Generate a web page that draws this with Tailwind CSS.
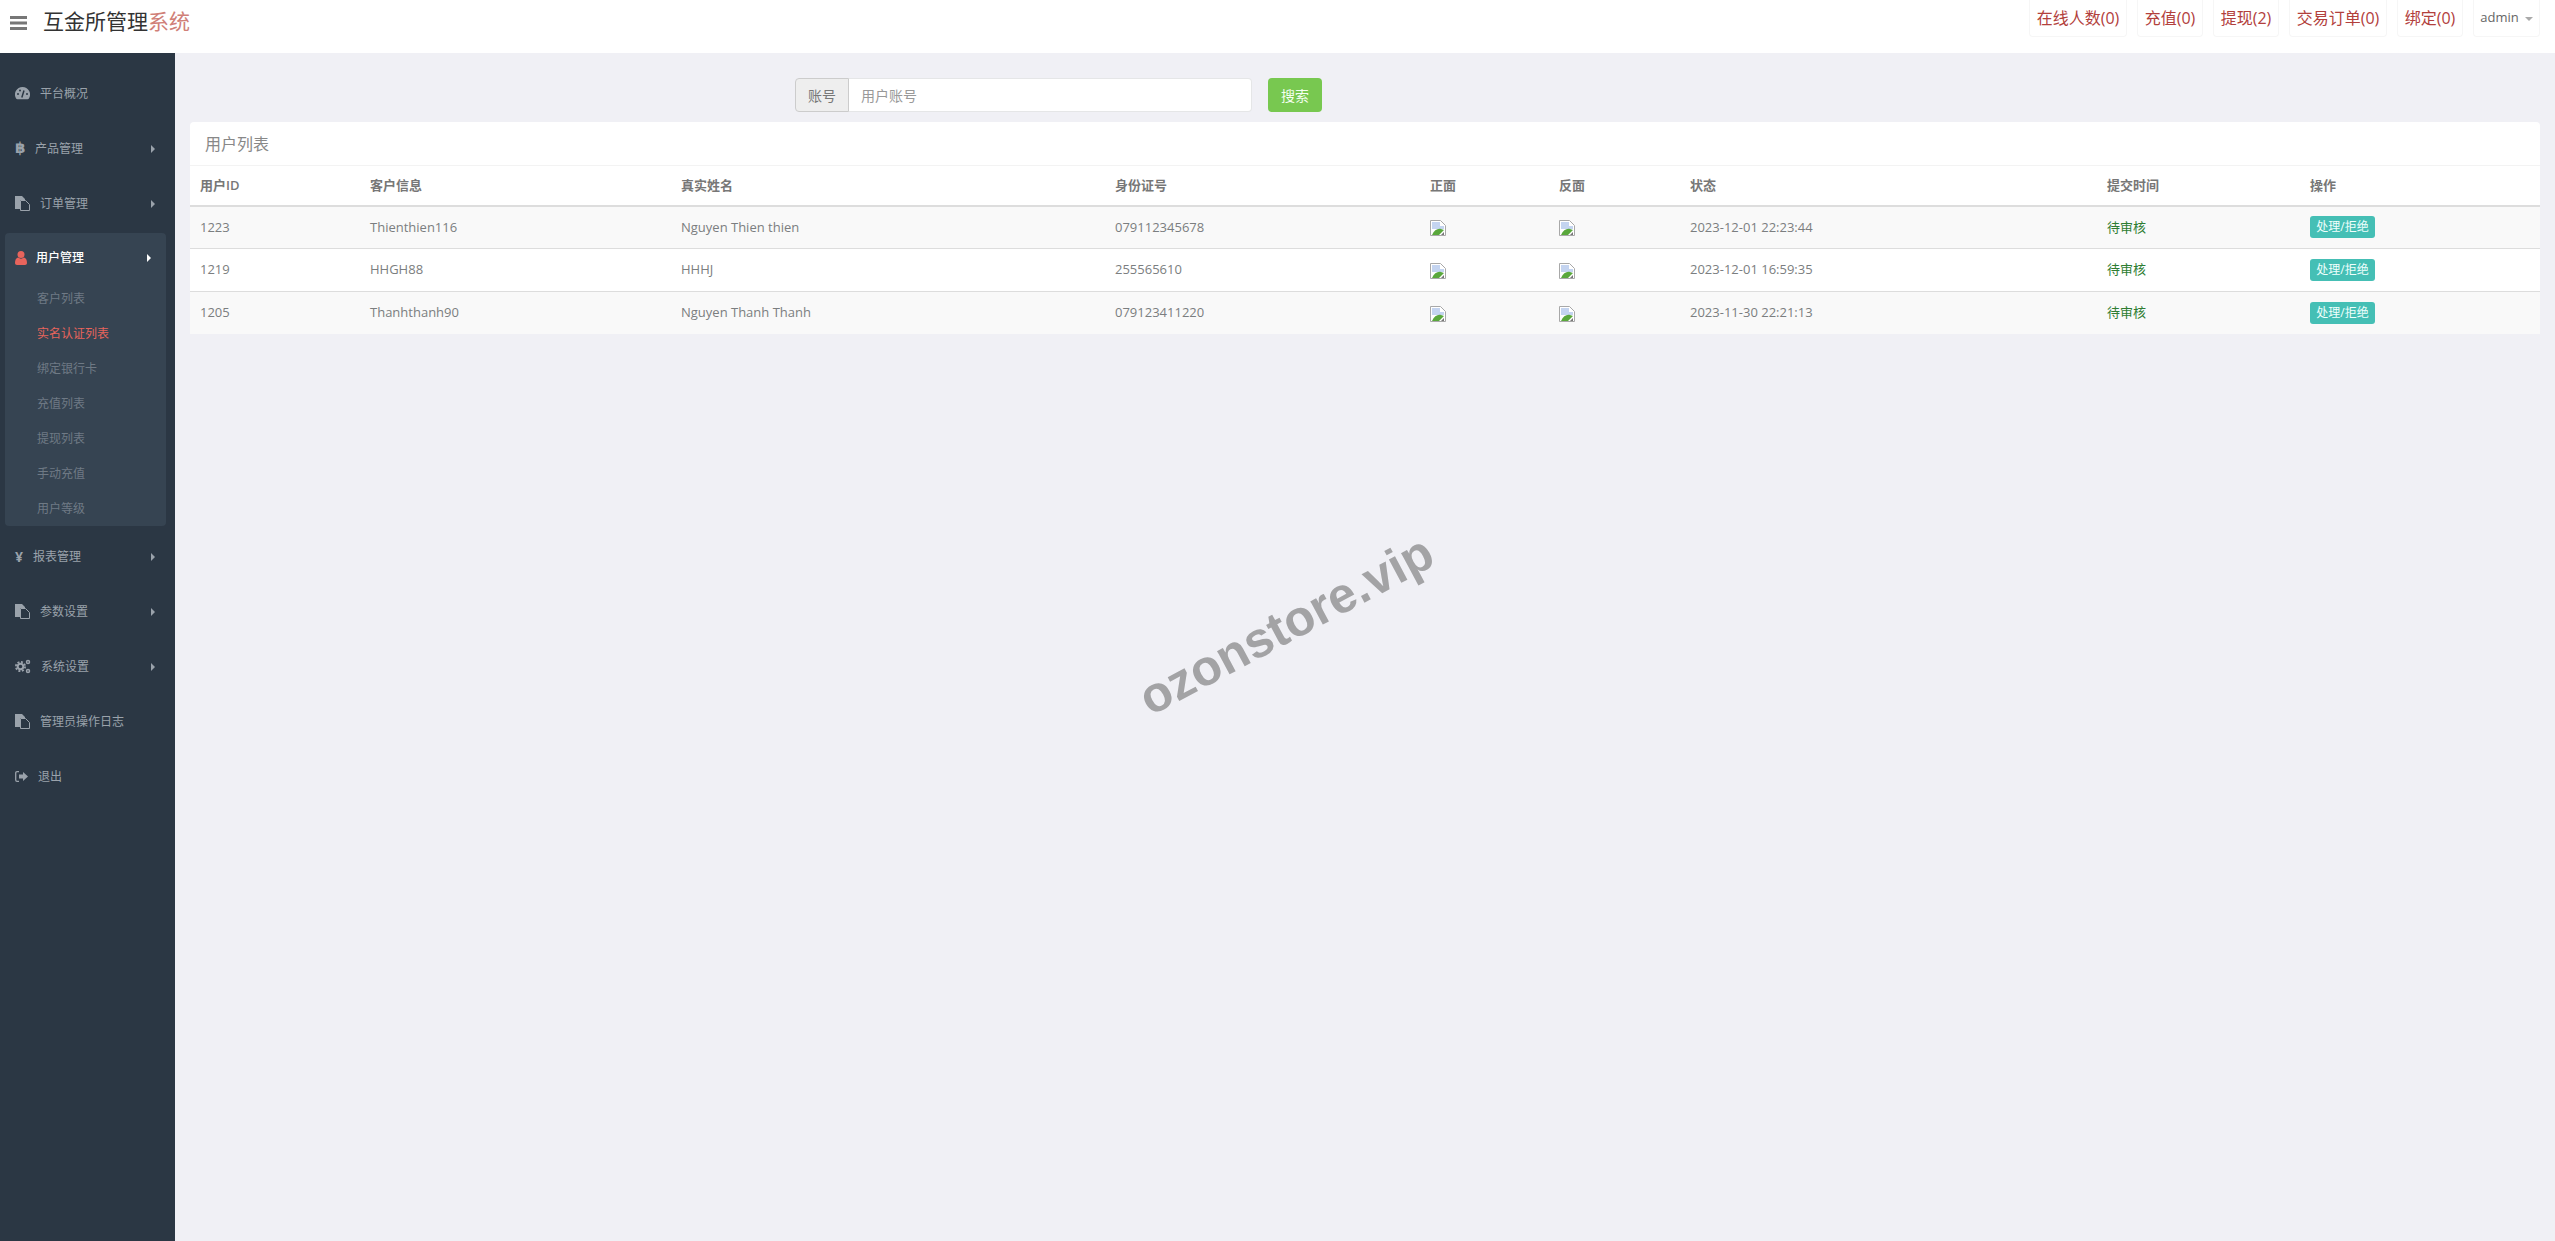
<!DOCTYPE html>
<html lang="zh">
<head>
    <meta charset="UTF-8">
    <title>互金所管理系统</title>
    <script src="https://cdn.jsdelivr.net/npm/@tailwindcss/browser@4"></script>
</head>
<body class="relative h-[1241px] overflow-hidden bg-[#f0f0f5] text-[13px] text-[#676a6c] font-['Open_Sans','Noto_Sans_CJK_SC',sans-serif]">

    <!-- Top bar -->
    <header class="flex h-[53px] bg-white">
        <div class="flex h-[45px] items-start pl-[10px] pt-[16px]">
            <svg class="w-[17px] h-[14px]" viewBox="0 0 17 14"><path fill="#777" d="M0 0h17v3H0zM0 5.500h17v3H0zM0 11h17v3H0z"/></svg>
            <span class="ml-[16px] -mt-[10px] text-[21px] leading-[30px] text-[#333]">互金所管理<span class="text-[#d08078]">系统</span></span>
        </div>
        <nav class="ml-auto mr-[15px] flex h-[37px] gap-[10px] text-[16px] text-[#b2403c]">
            <a class="flex w-[98px] items-center justify-center rounded-b border border-t-0 border-[#f6f6f6]">在线人数(0)</a>
            <a class="flex w-[66px] items-center justify-center rounded-b border border-t-0 border-[#f6f6f6]">充值(0)</a>
            <a class="flex w-[66px] items-center justify-center rounded-b border border-t-0 border-[#f6f6f6]">提现(2)</a>
            <a class="flex w-[98px] items-center justify-center rounded-b border border-t-0 border-[#f6f6f6]">交易订单(0)</a>
            <a class="flex w-[66px] items-center justify-center rounded-b border border-t-0 border-[#f6f6f6]">绑定(0)</a>
            <a class="flex w-[67px] items-center justify-center gap-[6px] rounded-b border border-t-0 border-[#f6f6f6] text-[13px] text-[#666]">admin<span class="mt-[1px] border-x-[4px] border-t-[4px] border-x-transparent border-t-[#aaa]"></span></a>
        </nav>
    </header>

    <div class="flex h-[1188px]">
        <!-- Sidebar -->
        <aside class="w-[175px] shrink-0 bg-[#2b3744] pt-[13px] text-[12px] text-[#9aa2ab]">
            <a class="flex h-[55px] items-center pl-[15px]">
                <svg class="mr-[10px] w-[15px] h-[13px]" viewBox="0 0 15 13"><path fill="#9aa2ab" d="M7.500 0a7.500 7.500 0 0 1 6.400 11.400c-.3.500-.7.800-1.300.8H2.400c-.6 0-1-.3-1.300-.8A7.500 7.500 0 0 1 7.500 0z"/><circle cx="3" cy="7" r="1" fill="#2b3744"/><circle cx="5" cy="3.500" r="1" fill="#2b3744"/><circle cx="12" cy="7" r="1" fill="#2b3744"/><path stroke="#2b3744" stroke-width="1.500" d="M6.800 10.500 9 3.500"/></svg>
                <span>平台概况</span>
            </a>
            <a class="flex h-[55px] items-center pl-[15px]">
                <span class="mr-[5px] w-[15px] text-[15px] font-bold leading-none font-['DejaVu_Sans']">฿</span>
                <span>产品管理</span>
                <span class="ml-auto mr-[20px] border-y-[4px] border-l-[4px] border-y-transparent border-l-[#9aa2ab]"></span>
            </a>
            <a class="flex h-[55px] items-center pl-[15px]">
                <svg class="mr-[10px] w-[15px] h-[15px]" viewBox="0 0 15 15"><path fill="#9aa2ab" d="M0 0h7l3 3v1H5v9H0z"/><path fill="none" stroke="#9aa2ab" d="M5.500 4.500h5l4 4v6h-9z"/></svg>
                <span>订单管理</span>
                <span class="ml-auto mr-[20px] border-y-[4px] border-l-[4px] border-y-transparent border-l-[#9aa2ab]"></span>
            </a>

            <!-- Open group -->
            <div class="mx-[5px] mt-[2px] h-[293px] w-[161px] rounded bg-[#364452]">
                <a class="flex h-[48px] items-center pl-[10px] pt-[2px] font-medium text-white">
                    <svg class="mr-[9px] w-[12px] h-[14px]" viewBox="0 0 12 14"><circle cx="6" cy="3.500" r="3.500" fill="#e8645c"/><path fill="#e8645c" d="M0 12c0-3 1-5 3-5.500 2 1.500 4 1.500 6 0 2 .5 3 2.500 3 5.500 0 1.200-.8 2-2 2H2c-1.200 0-2-.8-2-2z"/></svg>
                    <span>用户管理</span>
                    <span class="ml-auto mr-[15px] border-y-[4px] border-l-[4px] border-y-transparent border-l-white"></span>
                </a>
                <ul class="text-[#6f7a85]">
                    <li class="flex h-[35px] items-center pl-[32px]">客户列表</li>
                    <li class="flex h-[35px] items-center pl-[32px] text-[#e8645c]">实名认证列表</li>
                    <li class="flex h-[35px] items-center pl-[32px]">绑定银行卡</li>
                    <li class="flex h-[35px] items-center pl-[32px]">充值列表</li>
                    <li class="flex h-[35px] items-center pl-[32px]">提现列表</li>
                    <li class="flex h-[35px] items-center pl-[32px]">手动充值</li>
                    <li class="flex h-[35px] items-center pl-[32px]">用户等级</li>
                </ul>
            </div>

            <a class="mt-[3px] flex h-[55px] items-center pl-[15px]">
                <span class="mr-[9px] w-[9px] text-[14px] font-bold leading-none">¥</span>
                <span>报表管理</span>
                <span class="ml-auto mr-[20px] border-y-[4px] border-l-[4px] border-y-transparent border-l-[#9aa2ab]"></span>
            </a>
            <a class="flex h-[55px] items-center pl-[15px]">
                <svg class="mr-[10px] w-[15px] h-[15px]" viewBox="0 0 15 15"><path fill="#9aa2ab" d="M0 0h7l3 3v1H5v9H0z"/><path fill="none" stroke="#9aa2ab" d="M5.500 4.500h5l4 4v6h-9z"/></svg>
                <span>参数设置</span>
                <span class="ml-auto mr-[20px] border-y-[4px] border-l-[4px] border-y-transparent border-l-[#9aa2ab]"></span>
            </a>
            <a class="flex h-[55px] items-center pl-[15px]">
                <svg class="mr-[10px] w-[16px] h-[15px]" viewBox="0 0 16 15" fill="none" stroke="#9aa2ab"><circle cx="5.500" cy="7.500" r="2.800" stroke-width="2"/><circle cx="5.500" cy="7.500" r="4.600" stroke-width="1.800" stroke-dasharray="2 1.600"/><circle cx="13" cy="3" r="1.500" stroke-width="1.500"/><circle cx="13" cy="12" r="1.500" stroke-width="1.500"/></svg>
                <span>系统设置</span>
                <span class="ml-auto mr-[20px] border-y-[4px] border-l-[4px] border-y-transparent border-l-[#9aa2ab]"></span>
            </a>
            <a class="flex h-[55px] items-center pl-[15px]">
                <svg class="mr-[10px] w-[15px] h-[15px]" viewBox="0 0 15 15"><path fill="#9aa2ab" d="M0 0h15v0H0z"/><path fill="none" stroke="#9aa2ab" d="M.5 0h0"/><path fill="#9aa2ab" d="M0 0h7l3 3v1H5v9H0z"/><path fill="none" stroke="#9aa2ab" d="M5.500 4.500h5l4 4v6h-9z"/></svg>
                <span>管理员操作日志</span>
            </a>
            <a class="flex h-[55px] items-center pl-[15px]">
                <svg class="mr-[10px] w-[13px] h-[11px]" viewBox="0 0 13 11"><path fill="none" stroke="#9aa2ab" stroke-width="1.300" d="M4 .7H2A1.300 1.300 0 0 0 .7 2v7A1.300 1.300 0 0 0 2 10.300h2"/><path fill="#9aa2ab" d="M4 3.500h4V1l5 4.500L8 10V7.500H4z"/></svg>
                <span>退出</span>
            </a>
        </aside>

        <!-- Main -->
        <main class="min-w-0 flex-1">
            <div class="ml-[620px] mt-[25px] flex h-[34px] text-[14px]">
                <span class="flex w-[54px] items-center justify-center rounded-l border border-[#ccc] bg-[#eee] text-[#777]">账号</span>
                <input class="h-full w-[403px] rounded-r border border-l-0 border-[#e5e6e7] bg-white px-[12px] placeholder-[#999]" placeholder="用户账号">
                <button class="ml-[16px] w-[54px] rounded bg-[#78c850] text-[#f4fff0]">搜索</button>
            </div>

            <section class="mx-[15px] mt-[10px] rounded-t bg-white">
                <h2 class="flex h-[44px] items-center border-b border-[#f3f3f3] pl-[15px] text-[16px] font-normal text-[#888]">用户列表</h2>
                <table class="w-[2350px] table-fixed text-left">
                    <thead>
                        <tr class="h-[40px] border-b-2 border-[#ddd] font-bold text-[#777]">
                            <th class="w-[170px] pl-[10px] font-semibold">用户ID</th>
                            <th class="w-[311px] pl-[10px] font-semibold">客户信息</th>
                            <th class="w-[434px] pl-[10px] font-semibold">真实姓名</th>
                            <th class="w-[315px] pl-[10px] font-semibold">身份证号</th>
                            <th class="w-[129px] pl-[10px] font-semibold">正面</th>
                            <th class="w-[131px] pl-[10px] font-semibold">反面</th>
                            <th class="w-[417px] pl-[10px] font-semibold">状态</th>
                            <th class="w-[203px] pl-[10px] font-semibold">提交时间</th>
                            <th class="w-[240px] pl-[10px] font-semibold">操作</th>
                        </tr>
                    </thead>
                    <tbody class="text-[#7b7e80]">
                        <tr class="h-[42px] bg-[#f9f9f9]">
                            <td class="pl-[10px]">1223</td>
                            <td class="pl-[10px]">Thienthien116</td>
                            <td class="pl-[10px]">Nguyen Thien thien</td>
                            <td class="pl-[10px]">079112345678</td>
                            <td class="pl-[10px]"><svg class="mt-[2px] w-[16px] h-[16px]" viewBox="0 0 16 16"><path fill="#fff" stroke="#a8a8a8" d="M.5.5h10l5 5v10H.5z"/><path fill="#c4d4f0" d="M2 2h8v4h4v3H2z"/><path fill="#5aa83c" d="M2 15c2-5 6-7 9-6l3 1-5 5z"/><path fill="#777" d="M11 15l3-3v3z"/></svg></td>
                            <td class="pl-[10px]"><svg class="mt-[2px] w-[16px] h-[16px]" viewBox="0 0 16 16"><path fill="#fff" stroke="#a8a8a8" d="M.5.5h10l5 5v10H.5z"/><path fill="#c4d4f0" d="M2 2h8v4h4v3H2z"/><path fill="#5aa83c" d="M2 15c2-5 6-7 9-6l3 1-5 5z"/><path fill="#777" d="M11 15l3-3v3z"/></svg></td>
                            <td class="pl-[10px]">2023-12-01 22:23:44</td>
                            <td class="pl-[10px] text-[#2e7d32]">待审核</td>
                            <td class="pl-[10px]"><a class="inline-flex h-[22px] w-[65px] items-center justify-center rounded-[3px] bg-[#45bfb5] text-[12px] text-[#f0fffd]">处理/拒绝</a></td>
                        </tr>
                        <tr class="h-[43px] border-t border-[#ddd] bg-white">
                            <td class="pl-[10px]">1219</td>
                            <td class="pl-[10px]">HHGH88</td>
                            <td class="pl-[10px]">HHHJ</td>
                            <td class="pl-[10px]">255565610</td>
                            <td class="pl-[10px]"><svg class="mt-[2px] w-[16px] h-[16px]" viewBox="0 0 16 16"><path fill="#fff" stroke="#a8a8a8" d="M.5.5h10l5 5v10H.5z"/><path fill="#c4d4f0" d="M2 2h8v4h4v3H2z"/><path fill="#5aa83c" d="M2 15c2-5 6-7 9-6l3 1-5 5z"/><path fill="#777" d="M11 15l3-3v3z"/></svg></td>
                            <td class="pl-[10px]"><svg class="mt-[2px] w-[16px] h-[16px]" viewBox="0 0 16 16"><path fill="#fff" stroke="#a8a8a8" d="M.5.5h10l5 5v10H.5z"/><path fill="#c4d4f0" d="M2 2h8v4h4v3H2z"/><path fill="#5aa83c" d="M2 15c2-5 6-7 9-6l3 1-5 5z"/><path fill="#777" d="M11 15l3-3v3z"/></svg></td>
                            <td class="pl-[10px]">2023-12-01 16:59:35</td>
                            <td class="pl-[10px] text-[#2e7d32]">待审核</td>
                            <td class="pl-[10px]"><a class="inline-flex h-[22px] w-[65px] items-center justify-center rounded-[3px] bg-[#45bfb5] text-[12px] text-[#f0fffd]">处理/拒绝</a></td>
                        </tr>
                        <tr class="h-[43px] border-t border-[#ddd] bg-[#f9f9f9]">
                            <td class="pl-[10px]">1205</td>
                            <td class="pl-[10px]">Thanhthanh90</td>
                            <td class="pl-[10px]">Nguyen Thanh Thanh</td>
                            <td class="pl-[10px]">079123411220</td>
                            <td class="pl-[10px]"><svg class="mt-[2px] w-[16px] h-[16px]" viewBox="0 0 16 16"><path fill="#fff" stroke="#a8a8a8" d="M.5.5h10l5 5v10H.5z"/><path fill="#c4d4f0" d="M2 2h8v4h4v3H2z"/><path fill="#5aa83c" d="M2 15c2-5 6-7 9-6l3 1-5 5z"/><path fill="#777" d="M11 15l3-3v3z"/></svg></td>
                            <td class="pl-[10px]"><svg class="mt-[2px] w-[16px] h-[16px]" viewBox="0 0 16 16"><path fill="#fff" stroke="#a8a8a8" d="M.5.5h10l5 5v10H.5z"/><path fill="#c4d4f0" d="M2 2h8v4h4v3H2z"/><path fill="#5aa83c" d="M2 15c2-5 6-7 9-6l3 1-5 5z"/><path fill="#777" d="M11 15l3-3v3z"/></svg></td>
                            <td class="pl-[10px]">2023-11-30 22:21:13</td>
                            <td class="pl-[10px] text-[#2e7d32]">待审核</td>
                            <td class="pl-[10px]"><a class="inline-flex h-[22px] w-[65px] items-center justify-center rounded-[3px] bg-[#45bfb5] text-[12px] text-[#f0fffd]">处理/拒绝</a></td>
                        </tr>
                    </tbody>
                </table>
            </section>
        </main>
    </div>

    <!-- Watermark -->
    <div class="absolute left-[1086px] top-[595px] w-[400px] -rotate-[28deg] text-center text-[50px] font-bold leading-[60px] text-[#a3a3a5] font-['Liberation_Sans',sans-serif]">ozonstore.vip</div>
</body>
</html>
